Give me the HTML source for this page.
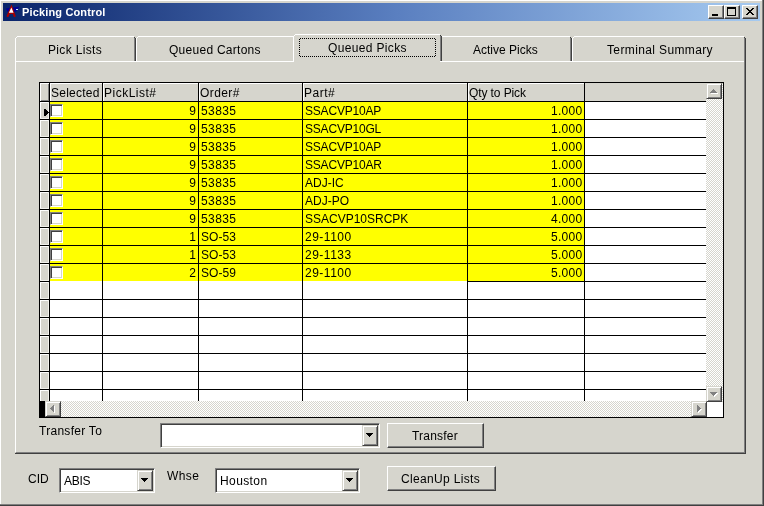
<!DOCTYPE html>
<html><head><meta charset="utf-8"><title>Picking Control</title>
<style>
html,body{margin:0;padding:0}
body{width:764px;height:506px;background:#d6d5cd;position:relative;overflow:hidden;font-family:"Liberation Sans",sans-serif}
body div,body svg{position:absolute;box-sizing:border-box}
.t{font:12px/14px "Liberation Sans",sans-serif;color:#000;white-space:nowrap;will-change:transform}
.r{text-align:right}
.btn{background:#d6d5cd;border:1px solid;border-color:#fff #404040 #404040 #fff;box-shadow:inset -1px -1px 0 #808080}
.sbtn{background:#d6d5cd;border:1px solid;border-color:#d6d5cd #404040 #404040 #d6d5cd;box-shadow:inset 1px 1px 0 #fff,inset -1px -1px 0 #808080}
.sunk{background:#fff;border:1px solid;border-color:#808080 #fff #fff #808080;box-shadow:inset 1px 1px 0 #404040,inset -1px -1px 0 #d6d5cd}
.dither{background:conic-gradient(#fff 25%,#d6d5cd 0 50%,#fff 0 75%,#d6d5cd 0) 0 0/2px 2px}
</style></head>
<body>
<div style="left:0px;top:0px;width:762px;height:1px;background:#fff;"></div>
<div style="left:0px;top:0px;width:1px;height:504px;background:#fff;"></div>
<div style="left:762px;top:0px;width:1px;height:506px;background:#808080;"></div>
<div style="left:763px;top:0px;width:1px;height:506px;background:#404040;"></div>
<div style="left:0px;top:504px;width:763px;height:1px;background:#808080;"></div>
<div style="left:0px;top:505px;width:764px;height:1px;background:#404040;"></div>
<div style="left:3px;top:3px;width:757px;height:18px;background:linear-gradient(90deg,#0a246a 0%,#5a7fc0 52%,#a6caf0 100%);"></div>
<svg style="left:5px;top:4px" width="16" height="14" viewBox="0 0 16 14">
<polygon points="0.8,4.6 5,3.8 5,8 2.8,8" fill="#000094"/>
<polygon points="8,3.6 14.6,2.6 11,7.4 8,8" fill="#000094"/>
<polygon points="6.5,0.6 10.7,11.9 10.2,13 8.9,13 7.7,9.9 4.9,9.9 3.4,13 2.1,13 1.5,11.9" fill="#a80000"/>
<polygon points="6.4,3.5 8.6,8.8 3.9,8.8" fill="#fff"/>
<rect x="11" y="5" width="2" height="1" fill="#c8e4ff"/>
</svg>
<div class="t" style="left:22px;top:5px;font:bold 11px/14px 'Liberation Sans',sans-serif;color:#fff;letter-spacing:0.15px">Picking Control</div>
<div class="btn" style="left:708px;top:5px;width:16px;height:14px"><div style="left:3px;top:8px;width:6px;height:2px;background:#000"></div></div>
<div class="btn" style="left:724px;top:5px;width:16px;height:14px"><div style="left:2px;top:1px;width:9px;height:9px;border:1px solid #000;border-top-width:2px"></div></div>
<div class="btn" style="left:742px;top:5px;width:16px;height:14px"></div>
<div style="left:746px;top:8px;width:2px;height:1px;background:#000;"></div>
<div style="left:752px;top:8px;width:2px;height:1px;background:#000;"></div>
<div style="left:747px;top:9px;width:2px;height:1px;background:#000;"></div>
<div style="left:751px;top:9px;width:2px;height:1px;background:#000;"></div>
<div style="left:748px;top:10px;width:4px;height:1px;background:#000;"></div>
<div style="left:749px;top:11px;width:2px;height:1px;background:#000;"></div>
<div style="left:748px;top:12px;width:4px;height:1px;background:#000;"></div>
<div style="left:747px;top:13px;width:2px;height:1px;background:#000;"></div>
<div style="left:751px;top:13px;width:2px;height:1px;background:#000;"></div>
<div style="left:746px;top:14px;width:2px;height:1px;background:#000;"></div>
<div style="left:752px;top:14px;width:2px;height:1px;background:#000;"></div>
<div style="left:15px;top:61px;width:729px;height:1px;background:#fff;"></div>
<div style="left:15px;top:61px;width:1px;height:391px;background:#fff;"></div>
<div style="left:744px;top:61px;width:1px;height:392px;background:#808080;"></div>
<div style="left:745px;top:61px;width:1px;height:393px;background:#404040;"></div>
<div style="left:16px;top:452px;width:729px;height:1px;background:#808080;"></div>
<div style="left:15px;top:453px;width:731px;height:1px;background:#404040;"></div>
<div style="left:15px;top:38px;width:1px;height:23px;background:#fff;"></div>
<div style="left:16px;top:37px;width:1px;height:1px;background:#fff;"></div>
<div style="left:17px;top:36px;width:117px;height:1px;background:#fff;"></div>
<div style="left:134px;top:38px;width:1px;height:23px;background:#808080;"></div>
<div style="left:135px;top:38px;width:1px;height:23px;background:#404040;"></div>
<div style="left:134px;top:37px;width:1px;height:1px;background:#404040;"></div>
<div class="t" style="left:47.7px;top:43px;letter-spacing:0.33px;">Pick Lists</div>
<div style="left:136px;top:38px;width:1px;height:23px;background:#fff;"></div>
<div style="left:137px;top:37px;width:1px;height:1px;background:#fff;"></div>
<div style="left:138px;top:36px;width:155px;height:1px;background:#fff;"></div>
<div class="t" style="left:168.9px;top:43px;letter-spacing:0.27px;">Queued Cartons</div>
<div style="left:442px;top:36px;width:128px;height:1px;background:#fff;"></div>
<div style="left:570px;top:38px;width:1px;height:23px;background:#808080;"></div>
<div style="left:571px;top:38px;width:1px;height:23px;background:#404040;"></div>
<div style="left:570px;top:37px;width:1px;height:1px;background:#404040;"></div>
<div class="t" style="left:472.65px;top:43px;">Active Picks</div>
<div style="left:572px;top:38px;width:1px;height:23px;background:#fff;"></div>
<div style="left:573px;top:37px;width:1px;height:1px;background:#fff;"></div>
<div style="left:574px;top:36px;width:170px;height:1px;background:#fff;"></div>
<div style="left:744px;top:38px;width:1px;height:23px;background:#808080;"></div>
<div style="left:745px;top:38px;width:1px;height:23px;background:#404040;"></div>
<div style="left:744px;top:37px;width:1px;height:1px;background:#404040;"></div>
<div class="t" style="left:606.5px;top:43px;letter-spacing:0.37px;">Terminal Summary</div>
<div style="left:293px;top:34px;width:149px;height:28px;background:#d6d5cd;"></div>
<div style="left:293px;top:36px;width:1px;height:26px;background:#fff;"></div>
<div style="left:294px;top:35px;width:1px;height:1px;background:#fff;"></div>
<div style="left:295px;top:34px;width:145px;height:1px;background:#fff;"></div>
<div style="left:440px;top:36px;width:1px;height:25px;background:#808080;"></div>
<div style="left:441px;top:36px;width:1px;height:25px;background:#404040;"></div>
<div style="left:440px;top:35px;width:1px;height:1px;background:#404040;"></div>
<div style="left:293px;top:34px;width:2px;height:1px;background:#d6d5cd;"></div>
<div style="left:293px;top:35px;width:1px;height:1px;background:#d6d5cd;"></div>
<div style="left:440px;top:34px;width:2px;height:1px;background:#d6d5cd;"></div>
<div style="left:441px;top:35px;width:1px;height:1px;background:#d6d5cd;"></div>
<div style="left:440px;top:61px;width:2px;height:1px;background:#fff;"></div>
<div class="t" style="left:327.7px;top:41px;letter-spacing:0.35px;">Queued Picks</div>
<div style="left:299px;top:38px;width:137px;height:19px;background:repeating-linear-gradient(90deg,transparent 0 1px,#000 1px 2px) 0 0/100% 1px no-repeat,repeating-linear-gradient(90deg,transparent 0 1px,#000 1px 2px) 0 100%/100% 1px no-repeat,repeating-linear-gradient(180deg,transparent 0 1px,#000 1px 2px) 0 0/1px 100% no-repeat,repeating-linear-gradient(180deg,transparent 0 1px,#000 1px 2px) 100% 0/1px 100% no-repeat"></div>
<div style="left:39px;top:82px;width:685px;height:336px;background:#fff;border:1px solid #000"></div>
<div style="left:40px;top:83px;width:666px;height:18px;background:#d6d5cd;"></div>
<div style="left:40px;top:83px;width:9px;height:1px;background:#fff;"></div>
<div style="left:40px;top:83px;width:1px;height:18px;background:#fff;"></div>
<div style="left:50px;top:83px;width:52px;height:1px;background:#fff;"></div>
<div style="left:50px;top:83px;width:1px;height:18px;background:#fff;"></div>
<div style="left:103px;top:83px;width:95px;height:1px;background:#fff;"></div>
<div style="left:103px;top:83px;width:1px;height:18px;background:#fff;"></div>
<div style="left:199px;top:83px;width:103px;height:1px;background:#fff;"></div>
<div style="left:199px;top:83px;width:1px;height:18px;background:#fff;"></div>
<div style="left:303px;top:83px;width:164px;height:1px;background:#fff;"></div>
<div style="left:303px;top:83px;width:1px;height:18px;background:#fff;"></div>
<div style="left:468px;top:83px;width:116px;height:1px;background:#fff;"></div>
<div style="left:468px;top:83px;width:1px;height:18px;background:#fff;"></div>
<div style="left:48px;top:84px;width:1px;height:17px;background:#808080;"></div>
<div style="left:41px;top:100px;width:8px;height:1px;background:#808080;"></div>
<div style="left:50px;top:102px;width:534px;height:180px;background:#ffff00;"></div>
<div style="left:40px;top:102px;width:9px;height:299px;background:#d6d5cd;"></div>
<div style="left:40px;top:101px;width:666px;height:1px;background:#000;"></div>
<div style="left:40px;top:119px;width:666px;height:1px;background:#000;"></div>
<div style="left:40px;top:137px;width:666px;height:1px;background:#000;"></div>
<div style="left:40px;top:155px;width:666px;height:1px;background:#000;"></div>
<div style="left:40px;top:173px;width:666px;height:1px;background:#000;"></div>
<div style="left:40px;top:191px;width:666px;height:1px;background:#000;"></div>
<div style="left:40px;top:209px;width:666px;height:1px;background:#000;"></div>
<div style="left:40px;top:227px;width:666px;height:1px;background:#000;"></div>
<div style="left:40px;top:245px;width:666px;height:1px;background:#000;"></div>
<div style="left:40px;top:263px;width:666px;height:1px;background:#000;"></div>
<div style="left:40px;top:281px;width:666px;height:1px;background:#000;"></div>
<div style="left:40px;top:299px;width:666px;height:1px;background:#000;"></div>
<div style="left:40px;top:317px;width:666px;height:1px;background:#000;"></div>
<div style="left:40px;top:335px;width:666px;height:1px;background:#000;"></div>
<div style="left:40px;top:353px;width:666px;height:1px;background:#000;"></div>
<div style="left:40px;top:371px;width:666px;height:1px;background:#000;"></div>
<div style="left:40px;top:389px;width:666px;height:1px;background:#000;"></div>
<div style="left:50px;top:281px;width:417px;height:1px;background:#fff;"></div>
<div style="left:49px;top:83px;width:1px;height:318px;background:#000;"></div>
<div style="left:102px;top:83px;width:1px;height:318px;background:#000;"></div>
<div style="left:198px;top:83px;width:1px;height:318px;background:#000;"></div>
<div style="left:302px;top:83px;width:1px;height:318px;background:#000;"></div>
<div style="left:467px;top:83px;width:1px;height:318px;background:#000;"></div>
<div style="left:584px;top:83px;width:1px;height:318px;background:#000;"></div>
<div style="left:40px;top:102px;width:1px;height:17px;background:#fff;"></div>
<div style="left:40px;top:102px;width:9px;height:1px;background:#fff;"></div>
<div style="left:48px;top:102px;width:1px;height:17px;background:#f2f1ec;"></div>
<div style="left:40px;top:118px;width:9px;height:1px;background:#f2f1ec;"></div>
<div style="left:40px;top:120px;width:1px;height:17px;background:#fff;"></div>
<div style="left:40px;top:120px;width:9px;height:1px;background:#fff;"></div>
<div style="left:48px;top:120px;width:1px;height:17px;background:#f2f1ec;"></div>
<div style="left:40px;top:136px;width:9px;height:1px;background:#f2f1ec;"></div>
<div style="left:40px;top:138px;width:1px;height:17px;background:#fff;"></div>
<div style="left:40px;top:138px;width:9px;height:1px;background:#fff;"></div>
<div style="left:48px;top:138px;width:1px;height:17px;background:#f2f1ec;"></div>
<div style="left:40px;top:154px;width:9px;height:1px;background:#f2f1ec;"></div>
<div style="left:40px;top:156px;width:1px;height:17px;background:#fff;"></div>
<div style="left:40px;top:156px;width:9px;height:1px;background:#fff;"></div>
<div style="left:48px;top:156px;width:1px;height:17px;background:#f2f1ec;"></div>
<div style="left:40px;top:172px;width:9px;height:1px;background:#f2f1ec;"></div>
<div style="left:40px;top:174px;width:1px;height:17px;background:#fff;"></div>
<div style="left:40px;top:174px;width:9px;height:1px;background:#fff;"></div>
<div style="left:48px;top:174px;width:1px;height:17px;background:#f2f1ec;"></div>
<div style="left:40px;top:190px;width:9px;height:1px;background:#f2f1ec;"></div>
<div style="left:40px;top:192px;width:1px;height:17px;background:#fff;"></div>
<div style="left:40px;top:192px;width:9px;height:1px;background:#fff;"></div>
<div style="left:48px;top:192px;width:1px;height:17px;background:#f2f1ec;"></div>
<div style="left:40px;top:208px;width:9px;height:1px;background:#f2f1ec;"></div>
<div style="left:40px;top:210px;width:1px;height:17px;background:#fff;"></div>
<div style="left:40px;top:210px;width:9px;height:1px;background:#fff;"></div>
<div style="left:48px;top:210px;width:1px;height:17px;background:#f2f1ec;"></div>
<div style="left:40px;top:226px;width:9px;height:1px;background:#f2f1ec;"></div>
<div style="left:40px;top:228px;width:1px;height:17px;background:#fff;"></div>
<div style="left:40px;top:228px;width:9px;height:1px;background:#fff;"></div>
<div style="left:48px;top:228px;width:1px;height:17px;background:#f2f1ec;"></div>
<div style="left:40px;top:244px;width:9px;height:1px;background:#f2f1ec;"></div>
<div style="left:40px;top:246px;width:1px;height:17px;background:#fff;"></div>
<div style="left:40px;top:246px;width:9px;height:1px;background:#fff;"></div>
<div style="left:48px;top:246px;width:1px;height:17px;background:#f2f1ec;"></div>
<div style="left:40px;top:262px;width:9px;height:1px;background:#f2f1ec;"></div>
<div style="left:40px;top:264px;width:1px;height:17px;background:#fff;"></div>
<div style="left:40px;top:264px;width:9px;height:1px;background:#fff;"></div>
<div style="left:48px;top:264px;width:1px;height:17px;background:#f2f1ec;"></div>
<div style="left:40px;top:280px;width:9px;height:1px;background:#f2f1ec;"></div>
<div style="left:40px;top:282px;width:1px;height:17px;background:#fff;"></div>
<div style="left:40px;top:282px;width:9px;height:1px;background:#fff;"></div>
<div style="left:48px;top:282px;width:1px;height:17px;background:#f2f1ec;"></div>
<div style="left:40px;top:298px;width:9px;height:1px;background:#f2f1ec;"></div>
<div style="left:40px;top:300px;width:1px;height:17px;background:#fff;"></div>
<div style="left:40px;top:300px;width:9px;height:1px;background:#fff;"></div>
<div style="left:48px;top:300px;width:1px;height:17px;background:#f2f1ec;"></div>
<div style="left:40px;top:316px;width:9px;height:1px;background:#f2f1ec;"></div>
<div style="left:40px;top:318px;width:1px;height:17px;background:#fff;"></div>
<div style="left:40px;top:318px;width:9px;height:1px;background:#fff;"></div>
<div style="left:48px;top:318px;width:1px;height:17px;background:#f2f1ec;"></div>
<div style="left:40px;top:334px;width:9px;height:1px;background:#f2f1ec;"></div>
<div style="left:40px;top:336px;width:1px;height:17px;background:#fff;"></div>
<div style="left:40px;top:336px;width:9px;height:1px;background:#fff;"></div>
<div style="left:48px;top:336px;width:1px;height:17px;background:#f2f1ec;"></div>
<div style="left:40px;top:352px;width:9px;height:1px;background:#f2f1ec;"></div>
<div style="left:40px;top:354px;width:1px;height:17px;background:#fff;"></div>
<div style="left:40px;top:354px;width:9px;height:1px;background:#fff;"></div>
<div style="left:48px;top:354px;width:1px;height:17px;background:#f2f1ec;"></div>
<div style="left:40px;top:370px;width:9px;height:1px;background:#f2f1ec;"></div>
<div style="left:40px;top:372px;width:1px;height:17px;background:#fff;"></div>
<div style="left:40px;top:372px;width:9px;height:1px;background:#fff;"></div>
<div style="left:48px;top:372px;width:1px;height:17px;background:#f2f1ec;"></div>
<div style="left:40px;top:388px;width:9px;height:1px;background:#f2f1ec;"></div>
<div style="left:40px;top:390px;width:1px;height:11px;background:#fff;"></div>
<div style="left:40px;top:390px;width:9px;height:1px;background:#fff;"></div>
<div style="left:48px;top:390px;width:1px;height:11px;background:#f2f1ec;"></div>
<div class="t" style="left:50.6px;top:86px;letter-spacing:0.25px;">Selected</div>
<div class="t" style="left:103.6px;top:86px;letter-spacing:0.5px;">PickList#</div>
<div class="t" style="left:199.8px;top:86px;letter-spacing:0.4px;">Order#</div>
<div class="t" style="left:304px;top:86px;letter-spacing:0.5px;">Part#</div>
<div class="t" style="left:468.5px;top:86px;letter-spacing:-0.1px;">Qty to Pick</div>
<div class="sunk" style="left:50px;top:104px;width:13px;height:13px"></div>
<div class="t r" style="left:103px;top:104px;width:93px;">9</div>
<div class="t" style="left:201.3px;top:104px;letter-spacing:0.4px;">53835</div>
<div class="t" style="left:305px;top:104px;letter-spacing:-0.2px;">SSACVP10AP</div>
<div class="t r" style="left:468px;top:104px;width:114.4px;letter-spacing:0.25px;">1.000</div>
<div class="sunk" style="left:50px;top:122px;width:13px;height:13px"></div>
<div class="t r" style="left:103px;top:122px;width:93px;">9</div>
<div class="t" style="left:201.3px;top:122px;letter-spacing:0.4px;">53835</div>
<div class="t" style="left:305px;top:122px;letter-spacing:-0.2px;">SSACVP10GL</div>
<div class="t r" style="left:468px;top:122px;width:114.4px;letter-spacing:0.25px;">1.000</div>
<div class="sunk" style="left:50px;top:140px;width:13px;height:13px"></div>
<div class="t r" style="left:103px;top:140px;width:93px;">9</div>
<div class="t" style="left:201.3px;top:140px;letter-spacing:0.4px;">53835</div>
<div class="t" style="left:305px;top:140px;letter-spacing:-0.2px;">SSACVP10AP</div>
<div class="t r" style="left:468px;top:140px;width:114.4px;letter-spacing:0.25px;">1.000</div>
<div class="sunk" style="left:50px;top:158px;width:13px;height:13px"></div>
<div class="t r" style="left:103px;top:158px;width:93px;">9</div>
<div class="t" style="left:201.3px;top:158px;letter-spacing:0.4px;">53835</div>
<div class="t" style="left:305px;top:158px;letter-spacing:-0.2px;">SSACVP10AR</div>
<div class="t r" style="left:468px;top:158px;width:114.4px;letter-spacing:0.25px;">1.000</div>
<div class="sunk" style="left:50px;top:176px;width:13px;height:13px"></div>
<div class="t r" style="left:103px;top:176px;width:93px;">9</div>
<div class="t" style="left:201.3px;top:176px;letter-spacing:0.4px;">53835</div>
<div class="t" style="left:305px;top:176px;">ADJ-IC</div>
<div class="t r" style="left:468px;top:176px;width:114.4px;letter-spacing:0.25px;">1.000</div>
<div class="sunk" style="left:50px;top:194px;width:13px;height:13px"></div>
<div class="t r" style="left:103px;top:194px;width:93px;">9</div>
<div class="t" style="left:201.3px;top:194px;letter-spacing:0.4px;">53835</div>
<div class="t" style="left:305px;top:194px;">ADJ-PO</div>
<div class="t r" style="left:468px;top:194px;width:114.4px;letter-spacing:0.25px;">1.000</div>
<div class="sunk" style="left:50px;top:212px;width:13px;height:13px"></div>
<div class="t r" style="left:103px;top:212px;width:93px;">9</div>
<div class="t" style="left:201.3px;top:212px;letter-spacing:0.4px;">53835</div>
<div class="t" style="left:305px;top:212px;">SSACVP10SRCPK</div>
<div class="t r" style="left:468px;top:212px;width:114.4px;letter-spacing:0.25px;">4.000</div>
<div class="sunk" style="left:50px;top:230px;width:13px;height:13px"></div>
<div class="t r" style="left:103px;top:230px;width:93px;">1</div>
<div class="t" style="left:201.3px;top:230px;letter-spacing:0.05px;">SO-53</div>
<div class="t" style="left:305px;top:230px;letter-spacing:0.5px;">29-1100</div>
<div class="t r" style="left:468px;top:230px;width:114.4px;letter-spacing:0.25px;">5.000</div>
<div class="sunk" style="left:50px;top:248px;width:13px;height:13px"></div>
<div class="t r" style="left:103px;top:248px;width:93px;">1</div>
<div class="t" style="left:201.3px;top:248px;letter-spacing:0.05px;">SO-53</div>
<div class="t" style="left:305px;top:248px;letter-spacing:0.5px;">29-1133</div>
<div class="t r" style="left:468px;top:248px;width:114.4px;letter-spacing:0.25px;">5.000</div>
<div class="sunk" style="left:50px;top:266px;width:13px;height:13px"></div>
<div class="t r" style="left:103px;top:266px;width:93px;">2</div>
<div class="t" style="left:201.3px;top:266px;letter-spacing:0.05px;">SO-59</div>
<div class="t" style="left:305px;top:266px;letter-spacing:0.5px;">29-1100</div>
<div class="t r" style="left:468px;top:266px;width:114.4px;letter-spacing:0.25px;">5.000</div>
<div style="left:44px;top:109px;width:2px;height:7px;background:#000;"></div>
<div style="left:46px;top:110px;width:1px;height:5px;background:#000;"></div>
<div style="left:47px;top:111px;width:1px;height:3px;background:#000;"></div>
<div style="left:48px;top:112px;width:1px;height:1px;background:#000;"></div>
<div class="dither" style="left:706px;top:83px;width:17px;height:319px"></div>
<div class="sbtn" style="left:706px;top:83px;width:16px;height:16px"></div>
<div style="left:714px;top:90px;width:1px;height:1px;background:#fff;"></div>
<div style="left:713px;top:91px;width:3px;height:1px;background:#fff;"></div>
<div style="left:712px;top:92px;width:5px;height:1px;background:#fff;"></div>
<div style="left:711px;top:93px;width:7px;height:1px;background:#fff;"></div>
<div style="left:713px;top:89px;width:1px;height:1px;background:#808080;"></div>
<div style="left:712px;top:90px;width:3px;height:1px;background:#808080;"></div>
<div style="left:711px;top:91px;width:5px;height:1px;background:#808080;"></div>
<div style="left:710px;top:92px;width:7px;height:1px;background:#808080;"></div>
<div class="sbtn" style="left:706px;top:386px;width:16px;height:16px"></div>
<div style="left:711px;top:393px;width:7px;height:1px;background:#fff;"></div>
<div style="left:712px;top:394px;width:5px;height:1px;background:#fff;"></div>
<div style="left:713px;top:395px;width:3px;height:1px;background:#fff;"></div>
<div style="left:714px;top:396px;width:1px;height:1px;background:#fff;"></div>
<div style="left:710px;top:392px;width:7px;height:1px;background:#808080;"></div>
<div style="left:711px;top:393px;width:5px;height:1px;background:#808080;"></div>
<div style="left:712px;top:394px;width:3px;height:1px;background:#808080;"></div>
<div style="left:713px;top:395px;width:1px;height:1px;background:#808080;"></div>
<div style="left:40px;top:401px;width:5px;height:16px;background:#000;"></div>
<div class="dither" style="left:61px;top:401px;width:630px;height:16px"></div>
<div class="sbtn" style="left:45px;top:401px;width:16px;height:16px"></div>
<div style="left:51px;top:409px;width:1px;height:1px;background:#fff;"></div>
<div style="left:52px;top:408px;width:1px;height:3px;background:#fff;"></div>
<div style="left:53px;top:407px;width:1px;height:5px;background:#fff;"></div>
<div style="left:54px;top:406px;width:1px;height:7px;background:#fff;"></div>
<div style="left:50px;top:408px;width:1px;height:1px;background:#808080;"></div>
<div style="left:51px;top:407px;width:1px;height:3px;background:#808080;"></div>
<div style="left:52px;top:406px;width:1px;height:5px;background:#808080;"></div>
<div style="left:53px;top:405px;width:1px;height:7px;background:#808080;"></div>
<div class="sbtn" style="left:691px;top:401px;width:16px;height:16px"></div>
<div style="left:698px;top:406px;width:1px;height:7px;background:#fff;"></div>
<div style="left:699px;top:407px;width:1px;height:5px;background:#fff;"></div>
<div style="left:700px;top:408px;width:1px;height:3px;background:#fff;"></div>
<div style="left:701px;top:409px;width:1px;height:1px;background:#fff;"></div>
<div style="left:697px;top:405px;width:1px;height:7px;background:#808080;"></div>
<div style="left:698px;top:406px;width:1px;height:5px;background:#808080;"></div>
<div style="left:699px;top:407px;width:1px;height:3px;background:#808080;"></div>
<div style="left:700px;top:408px;width:1px;height:1px;background:#808080;"></div>
<div style="left:707px;top:402px;width:16px;height:15px;background:#fff;"></div>
<div class="t" style="left:39px;top:424px;letter-spacing:0.28px;">Transfer To</div>
<div class="sunk" style="left:160px;top:423px;width:220px;height:25px"><div class="t" style="left:4px;top:5px;letter-spacing:0px"></div></div>
<div class="sbtn" style="left:362px;top:425px;width:16px;height:21px"></div>
<div style="left:366px;top:433px;width:7px;height:1px;background:#000;"></div>
<div style="left:367px;top:434px;width:5px;height:1px;background:#000;"></div>
<div style="left:368px;top:435px;width:3px;height:1px;background:#000;"></div>
<div style="left:369px;top:436px;width:1px;height:1px;background:#000;"></div>
<div class="btn" style="left:387px;top:423px;width:97px;height:25px"><div class="t" style="left:24.4px;top:5px;letter-spacing:0.2px">Transfer</div></div>
<div class="t" style="left:28px;top:472px;">CID</div>
<div class="sunk" style="left:59px;top:468px;width:96px;height:25px"><div class="t" style="left:4px;top:5px;letter-spacing:-0.3px">ABIS</div></div>
<div class="sbtn" style="left:137px;top:470px;width:16px;height:21px"></div>
<div style="left:141px;top:478px;width:7px;height:1px;background:#000;"></div>
<div style="left:142px;top:479px;width:5px;height:1px;background:#000;"></div>
<div style="left:143px;top:480px;width:3px;height:1px;background:#000;"></div>
<div style="left:144px;top:481px;width:1px;height:1px;background:#000;"></div>
<div class="t" style="left:166.8px;top:469px;letter-spacing:0.4px;">Whse</div>
<div class="sunk" style="left:215px;top:468px;width:145px;height:25px"><div class="t" style="left:4px;top:5px;letter-spacing:0.4px">Houston</div></div>
<div class="sbtn" style="left:342px;top:470px;width:16px;height:21px"></div>
<div style="left:346px;top:478px;width:7px;height:1px;background:#000;"></div>
<div style="left:347px;top:479px;width:5px;height:1px;background:#000;"></div>
<div style="left:348px;top:480px;width:3px;height:1px;background:#000;"></div>
<div style="left:349px;top:481px;width:1px;height:1px;background:#000;"></div>
<div class="btn" style="left:387px;top:466px;width:109px;height:25px"><div class="t" style="left:13.1px;top:5px;letter-spacing:0.33px">CleanUp Lists</div></div>
</body></html>
